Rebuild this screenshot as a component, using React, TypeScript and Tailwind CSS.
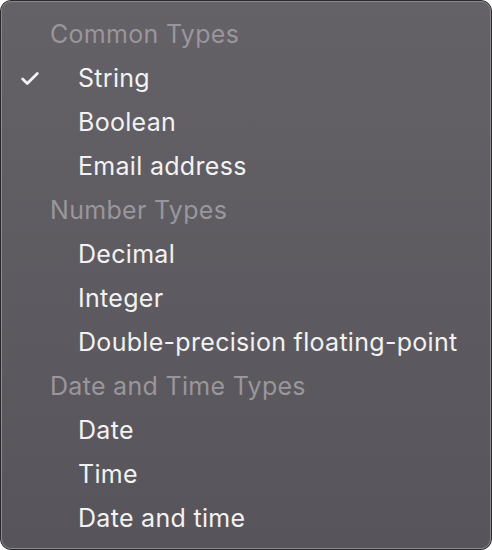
import { Check } from 'lucide-react';

type Row = { label: string; header?: boolean; checked?: boolean };

const rows: Row[] = [
  { label: 'Common Types', header: true },
  { label: 'String', checked: true },
  { label: 'Boolean' },
  { label: 'Email address' },
  { label: 'Number Types', header: true },
  { label: 'Decimal' },
  { label: 'Integer' },
  { label: 'Double-precision floating-point' },
  { label: 'Date and Time Types', header: true },
  { label: 'Date' },
  { label: 'Time' },
  { label: 'Date and time' },
];

export default function App() {
  return (
    <div className="w-[492px] h-[550px] bg-white">
      <div className="w-full h-full rounded-[11px] border border-[#2a292c] bg-[#4a484c]">
        <div
          className="h-full rounded-[10px] border border-[#8a888c] bg-gradient-to-b from-[#646167] to-[#57555b] pt-[11px] pb-[9px] font-['Inter',sans-serif] text-[25px] tracking-[0.3px]"
        >
          {rows.map((row) =>
            row.header ? (
              <div key={row.label} className="h-[44px] flex items-center pl-[48px] text-[#99969c]">
                {row.label}
              </div>
            ) : (
              <div key={row.label} className="h-[44px] flex items-center text-[#f2f2f3]">
                <span className="w-[76px] flex items-center pl-[17px]">
                  {row.checked && <Check className="w-[22px] h-[22px]" strokeWidth={3} />}
                </span>
                {row.label}
              </div>
            )
          )}
        </div>
      </div>
    </div>
  );
}
